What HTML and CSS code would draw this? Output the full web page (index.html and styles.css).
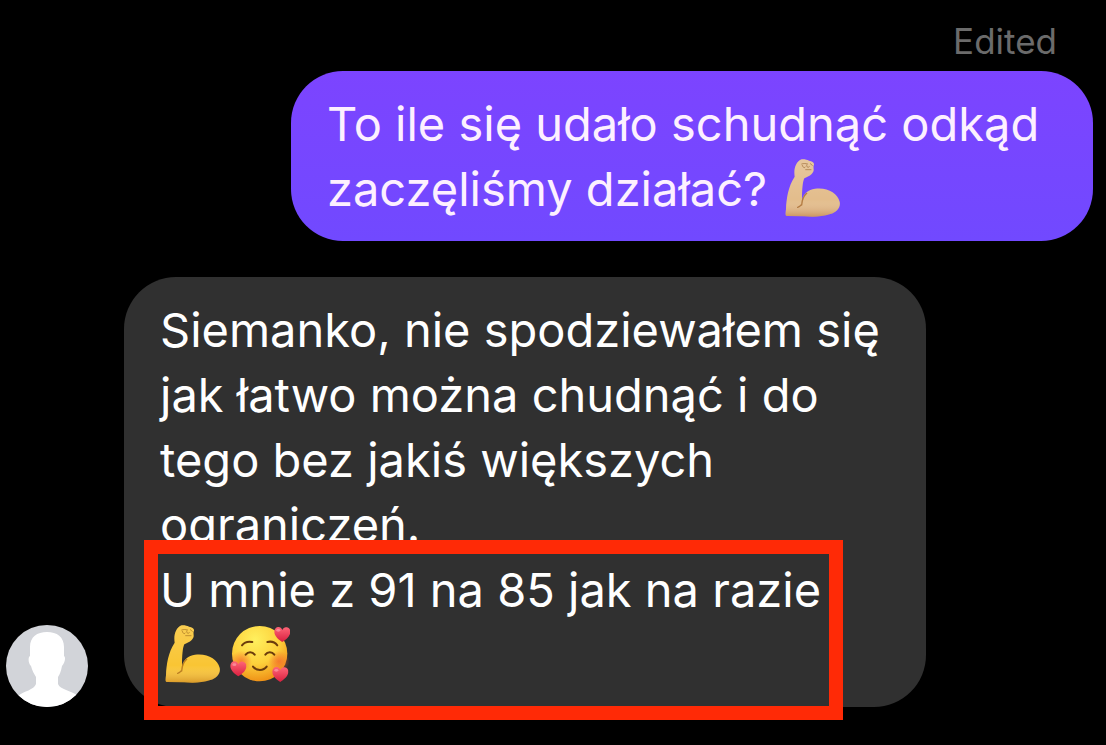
FILE: index.html
```html
<!DOCTYPE html>
<html lang="pl">
<head>
    <meta charset="UTF-8">
    <meta name="viewport" content="width=device-width, initial-scale=1.0">
    <title>Chat</title>
    <link rel="stylesheet" href="styles.css">
</head>
<body>
    <!-- Shared emoji shapes -->
    <svg class="defs" aria-hidden="true">
        <defs>
            <linearGradient id="arm-shade" x1="0" y1="0" x2="0" y2="1">
                <stop offset="0" stop-color="#fff" stop-opacity="0.15"/>
                <stop offset="0.7" stop-color="#fff" stop-opacity="0"/>
                <stop offset="1" stop-color="#a04a10" stop-opacity="0.35"/>
            </linearGradient>
            <radialGradient id="face-fill" cx="0.42" cy="0.25" r="0.78">
                <stop offset="0" stop-color="#fff05e"/>
                <stop offset="0.55" stop-color="#fdd13c"/>
                <stop offset="1" stop-color="#ee8d14"/>
            </radialGradient>
            <radialGradient id="blush">
                <stop offset="0" stop-color="#f4672c" stop-opacity="0.75"/>
                <stop offset="1" stop-color="#f4672c" stop-opacity="0"/>
            </radialGradient>
            <linearGradient id="heart-fill" x1="0" y1="0" x2="0" y2="1">
                <stop offset="0" stop-color="#ff6577"/>
                <stop offset="1" stop-color="#d91f3f"/>
            </linearGradient>
            <path id="arm-shape" d="M33 17 C37 10 43 2 50 1 C57 0 66 2 72 5 C81 7 88 10 87 17 C84 21 86 27 86 33 C86 38 82 42 80 45 C74 51 64 55 58 58 C53 68 51 92 51 122 C56 103 70 92 90 89 C127 84 158 102 164 128 C168 146 154 160 136 165 C111 174 82 174 58 172 L5 171 C0 170 2 160 3 151 C4 119 10 81 29 53 C27 40 28 27 33 17 Z"/>
            <symbol id="arm" viewBox="0 0 165 174">
                <use href="#arm-shape" fill="currentColor"/>
                <use href="#arm-shape" fill="url(#arm-shade)"/>
                <path d="M50 138 C51 122 56 111 65 103 M50 136 C46 141 42 144 38 145" fill="none" stroke="#95500f" stroke-opacity="0.6" stroke-width="4" stroke-linecap="round"/>
                <path d="M50 15 C56 13 62 13 68 15 M52 19 C54 26 58 28 61 24 M65 18 C65 25 69 27 73 23 M76 14 L82 19 M62 32 L78 32" fill="none" stroke="#7d470f" stroke-opacity="0.45" stroke-width="3" stroke-linecap="round"/>
            </symbol>
            <symbol id="heart" viewBox="0 0 50 50">
                <path d="M25 47 C16 41 1 30 1 16 C1 7 7 2 13 2 C19 2 23 6 25 11 C28 5 32 2 38 3 C45 4 50 9 49 18 C48 31 34 41 25 47 Z" fill="url(#heart-fill)"/>
                <ellipse cx="13" cy="12" rx="6" ry="4" fill="#fff" fill-opacity="0.3"/>
            </symbol>
        </defs>
    </svg>

    <main class="chat">
        <div class="sent">
            <span class="status">Edited</span>
            <div class="bubble bubble-sent">
                <p>To ile się udało schudnąć odkąd<br>zaczęliśmy działać? <svg class="emoji arm arm-light" role="img" aria-label="💪🏼"><use href="#arm"/></svg></p>
            </div>
        </div>

        <div class="received">
            <svg class="avatar" viewBox="0 0 82 82" role="img" aria-label="Avatar">
                <clipPath id="avatar-clip"><circle cx="41" cy="41" r="41"/></clipPath>
                <g clip-path="url(#avatar-clip)">
                    <rect width="82" height="82" fill="#d2d4d9"/>
                    <path d="M41 7 C51 7 58 12 58 22 L58 31 C60 32 59 38 56 41 C55 46 54 49 52 52 L52 59 C54 65 65 65 72 71 L80 84 L2 84 L12 71 C18 66 28 65 30 59 L30 52 C28 49 26 45 25 41 C22 38 22 32 24 31 L24 22 C24 12 31 7 41 7 Z" fill="#fff"/>
                </g>
            </svg>
            <div class="bubble bubble-received">
                <p>Siemanko, nie spodziewałem się<br>jak łatwo można chudnąć i do<br>tego bez jakiś większych<br>ograniczeń.</p>
                <p class="highlight">U mnie z 91 na 85 jak na razie<br><svg class="emoji arm arm-yellow" role="img" aria-label="💪"><use href="#arm"/></svg><svg class="emoji face" viewBox="224 28 180 174" role="img" aria-label="🥰">
                    <circle cx="313" cy="114" r="83" fill="url(#face-fill)"/>
                    <circle cx="258" cy="137" r="32" fill="url(#blush)"/>
                    <circle cx="371" cy="137" r="32" fill="url(#blush)"/>
                    <g fill="none" stroke="#6b3c0c" stroke-width="6" stroke-linecap="round">
                        <path d="M260 89 C267 80 278 76 291 79"/>
                        <path d="M336 79 C348 76 359 80 366 89"/>
                        <path d="M271 117 C278 107 291 107 298 117"/>
                        <path d="M330 117 C337 107 350 107 357 117"/>
                        <path d="M293 153 C303 166 325 166 334 153"/>
                    </g>
                    <use href="#heart" x="356" y="32" width="50" height="50"/>
                    <use href="#heart" x="224" y="135" width="50" height="50"/>
                    <use href="#heart" x="350" y="152" width="50" height="50"/>
                </svg></p>
            </div>
        </div>
    </main>
</body>
</html>
```
FILE: styles.css
```css
* {
    box-sizing: border-box;
}

body {
    margin: 0;
    background: #000;
    font-family: Inter, 'Liberation Sans', sans-serif;
}

.defs {
    position: absolute;
    width: 0;
    height: 0;
}

.chat {
    display: flex;
    flex-direction: column;
    gap: 36px;
    padding: 21px 13px 39px 6px;
}

.sent {
    display: flex;
    flex-direction: column;
    align-items: flex-end;
    gap: 10px;
}

.status {
    padding-right: 36px;
    font-size: 35px;
    line-height: 40px;
    color: #6b6b6b;
}

.received {
    display: flex;
    align-items: flex-end;
    gap: 36px;
}

.avatar {
    flex: none;
    width: 82px;
    height: 82px;
}

.bubble {
    width: 802px;
    max-width: 100%;
    padding: 20px 36px;
    border-radius: 52px;
    font-size: 47px;
    line-height: 65px;
}

.bubble p {
    margin: 0;
    white-space: nowrap;
}

.bubble-sent {
    background: linear-gradient(#7c44ff, #7149ff);
    color: #fdf0ff;
}

.bubble-received {
    background: #303030;
    color: #fff;
}

.emoji {
    height: 58px;
    margin: 0 5px;
    vertical-align: -11px;
}

.arm {
    width: 55px;
}

.arm-light {
    color: #e3bd8c;
}

.arm-yellow {
    color: #f9c534;
}

.face {
    width: 60px;
}

.highlight {
    position: relative;
    width: fit-content;
}

/* Red frame drawn over the bubble */
.highlight::after {
    content: '';
    position: absolute;
    top: -17px;
    right: -22px;
    bottom: -33px;
    left: -16px;
    border: 14px solid #ff2a06;
}
```
